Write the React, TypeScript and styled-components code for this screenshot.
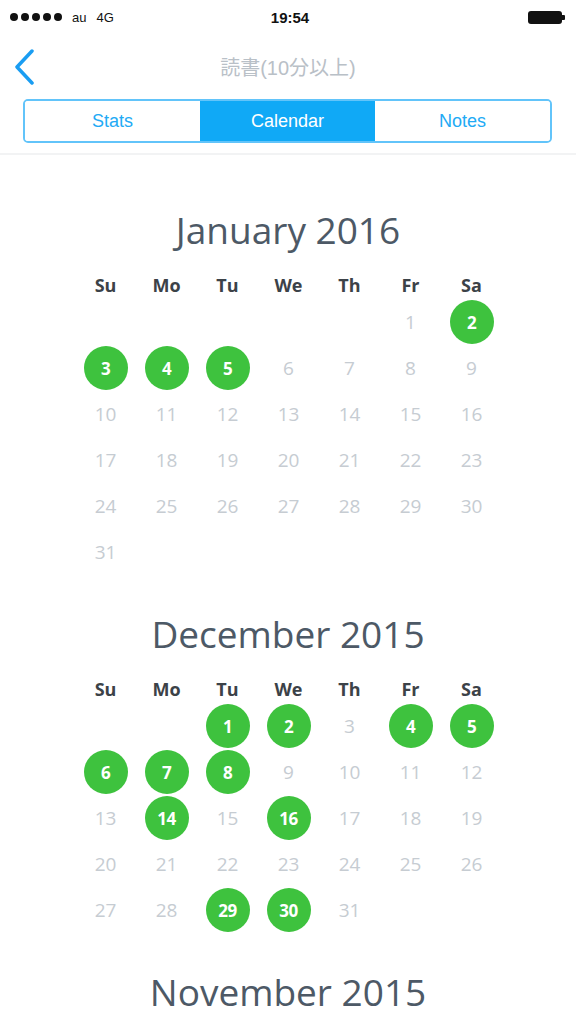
import React from "react";
import styled, { createGlobalStyle } from "styled-components";

const GlobalStyle = createGlobalStyle`
  html, body { margin: 0; padding: 0; background: #ffffff; }
  body { font-family: "Open Sans", "Noto Sans CJK JP", sans-serif; }
  * { box-sizing: border-box; }
`;

const Page = styled.div`
  width: 576px;
  height: 1024px;
  overflow: hidden;
  background: #ffffff;
`;

const StatusBar = styled.div`
  height: 34px;
  display: grid;
  grid-template-columns: 1fr auto 1fr;
  align-items: center;
  padding: 0 10px 0 10px;
  font-family: "Liberation Sans", "Noto Sans CJK JP", sans-serif;
  color: #111;
`;

const Carrier = styled.div`
  display: flex;
  align-items: center;
  gap: 10px;
  font-size: 13px;
`;

const Dots = styled.div`
  display: flex;
  gap: 3px;
`;

const Dot = styled.span`
  width: 8px;
  height: 8px;
  border-radius: 50%;
  background: #111;
`;

const Time = styled.div`
  font-size: 15px;
  font-weight: 700;
  padding-left: 4px;
`;

const Battery = styled.div`
  justify-self: end;
  display: flex;
  align-items: center;
  margin-right: 1px;
`;

const BatteryBody = styled.span`
  width: 34px;
  height: 13px;
  border-radius: 3px;
  background: #111;
`;

const BatteryNub = styled.span`
  width: 3px;
  height: 5px;
  background: #111;
  border-radius: 0 1px 1px 0;
`;

const NavBar = styled.div`
  position: relative;
  height: 64px;
  display: flex;
  align-items: center;
  justify-content: center;
`;

const BackButton = styled.button`
  position: absolute;
  left: 10px;
  top: 14px;
  border: none;
  background: none;
  padding: 0;
  width: 28px;
  height: 38px;
  display: flex;
  align-items: center;
  justify-content: center;
`;

const NavTitle = styled.div`
  font-family: "Liberation Sans", "Noto Sans CJK JP", sans-serif;
  font-size: 20px;
  color: #b9c0c7;
  margin-top: 1px;
`;

const SegmentWrap = styled.div`
  padding: 1px 24px 10px 23px;
  border-bottom: 2px solid #f2f3f4;
`;

const Segmented = styled.div`
  display: grid;
  grid-template-columns: repeat(3, 1fr);
  height: 44px;
  border: 2px solid #62c4fa;
  border-radius: 5px;
  overflow: hidden;
`;

const Segment = styled.div<{ $active?: boolean }>`
  display: flex;
  align-items: center;
  justify-content: center;
  font-family: "Liberation Sans", sans-serif;
  font-size: 18px;
  color: ${(p) => (p.$active ? "#ffffff" : "#22aaf5")};
  background: ${(p) => (p.$active ? "#10a9f6" : "#ffffff")};
`;

const Content = styled.div`
  padding-top: 51px;
  display: flex;
  flex-direction: column;
  gap: 35px;
`;

const Month = styled.section`
  display: flex;
  flex-direction: column;
  align-items: center;
`;

const MonthTitle = styled.h2`
  margin: 0 0 16px;
  font-family: "Open Sans", sans-serif;
  font-weight: 400;
  font-size: 37px;
  line-height: 48px;
  color: #4d5966;
`;

const Grid = styled.div`
  display: grid;
  grid-template-columns: repeat(7, 61px);
  grid-template-rows: 29px;
  grid-auto-rows: 46px;
  margin-left: 1px;
`;

const WeekHeader = styled.div`
  display: flex;
  align-items: center;
  justify-content: center;
  font-family: "Open Sans", sans-serif;
  font-weight: 700;
  font-size: 18px;
  color: #3c4248;
`;

const Cell = styled.div`
  display: flex;
  align-items: center;
  justify-content: center;
`;

const Day = styled.span<{ $done?: boolean }>`
  width: 44px;
  height: 44px;
  border-radius: 50%;
  display: flex;
  align-items: center;
  justify-content: center;
  font-family: "Open Sans", sans-serif;
  font-size: ${(p) => (p.$done ? "17px" : "19px")};
  font-weight: ${(p) => (p.$done ? 700 : 400)};
  letter-spacing: ${(p) => (p.$done ? "-0.5px" : "0")};
  color: ${(p) => (p.$done ? "#ffffff" : "#c6ccd2")};
  background: ${(p) => (p.$done ? "#3ec23e" : "transparent")};
`;

const WEEK = ["Su", "Mo", "Tu", "We", "Th", "Fr", "Sa"];

type MonthData = {
  title: string;
  startDay: number;
  days: number;
  done: number[];
};

const MONTHS: MonthData[] = [
  { title: "January 2016", startDay: 5, days: 31, done: [2, 3, 4, 5] },
  {
    title: "December 2015",
    startDay: 2,
    days: 31,
    done: [1, 2, 4, 5, 6, 7, 8, 14, 16, 29, 30],
  },
  { title: "November 2015", startDay: 0, days: 30, done: [1, 2, 3] },
];

function MonthView({ m }: { m: MonthData }) {
  const cells: (number | null)[] = [];
  for (let i = 0; i < m.startDay; i++) cells.push(null);
  for (let d = 1; d <= m.days; d++) cells.push(d);
  return (
    <Month>
      <MonthTitle>{m.title}</MonthTitle>
      <Grid>
        {WEEK.map((w) => (
          <WeekHeader key={w}>{w}</WeekHeader>
        ))}
        {cells.map((d, i) => (
          <Cell key={i}>
            {d !== null && <Day $done={m.done.includes(d)}>{d}</Day>}
          </Cell>
        ))}
      </Grid>
    </Month>
  );
}

export default function App() {
  return (
    <>
      <GlobalStyle />
      <Page>
        <StatusBar>
          <Carrier>
            <Dots>
              <Dot />
              <Dot />
              <Dot />
              <Dot />
              <Dot />
            </Dots>
            <span>au</span>
            <span>4G</span>
          </Carrier>
          <Time>19:54</Time>
          <Battery>
            <BatteryBody />
            <BatteryNub />
          </Battery>
        </StatusBar>
        <NavBar>
          <BackButton aria-label="Back">
            <svg width="22" height="36" viewBox="0 0 22 36">
              <polyline
                points="19,2 4,18 19,34"
                fill="none"
                stroke="#1a9df2"
                strokeWidth="3.5"
                strokeLinecap="round"
                strokeLinejoin="round"
              />
            </svg>
          </BackButton>
          <NavTitle>読書(10分以上)</NavTitle>
        </NavBar>
        <SegmentWrap>
          <Segmented>
            <Segment>Stats</Segment>
            <Segment $active>Calendar</Segment>
            <Segment>Notes</Segment>
          </Segmented>
        </SegmentWrap>
        <Content>
          {MONTHS.map((m) => (
            <MonthView key={m.title} m={m} />
          ))}
        </Content>
      </Page>
    </>
  );
}
